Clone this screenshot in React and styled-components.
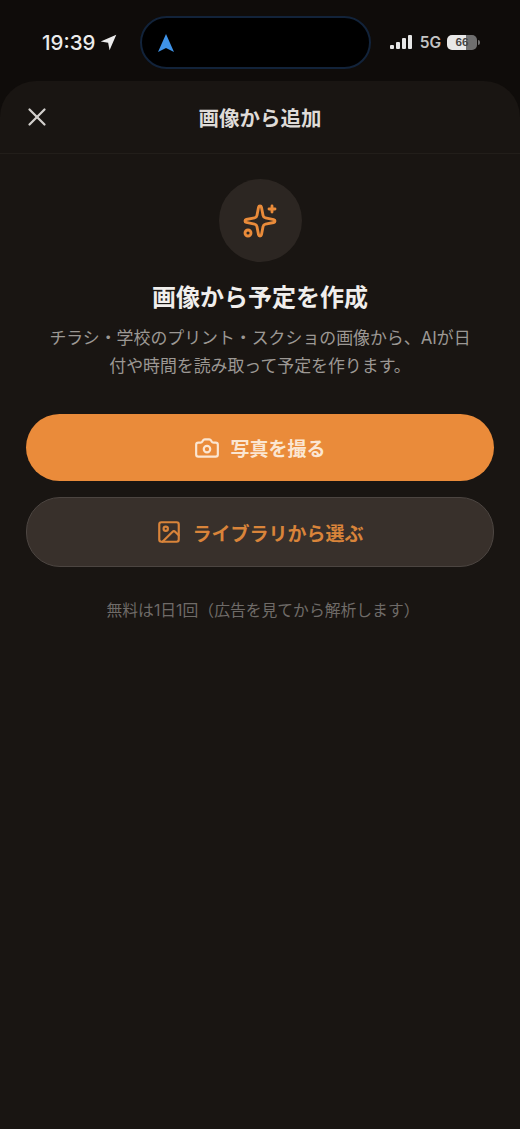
import React from "react";
import styled, { createGlobalStyle } from "styled-components";
import { X, Camera, Image as ImageIcon, Sparkles } from "lucide-react";

const Global = createGlobalStyle`
  html, body { margin: 0; padding: 0; background: #0f0c0a; }
  body { font-family: Inter, "Noto Sans CJK JP", sans-serif; }
`;

const Page = styled.div`
  width: 520px;
  height: 1129px;
  overflow: hidden;
  background: #0f0c0a;
  display: flex;
  flex-direction: column;
`;

const StatusBar = styled.div`
  height: 81px;
  flex-shrink: 0;
  display: flex;
  align-items: flex-start;
  padding: 16px 41px 0 42px;
  box-sizing: border-box;
`;

const Time = styled.div`
  width: 98px;
  height: 52px;
  display: flex;
  align-items: center;
  gap: 5px;
  color: #ececec;
  font-size: 20.5px;
  font-weight: 500;
`;

const Island = styled.div`
  width: 231px;
  height: 53px;
  box-sizing: border-box;
  border-radius: 27px;
  background: #000;
  border: 2px solid #12233a;
  display: flex;
  align-items: center;
  padding-left: 15px;
`;

const StatusRight = styled.div`
  flex: 1;
  height: 52px;
  display: flex;
  align-items: center;
  justify-content: flex-end;
  gap: 6px;
  color: #c4c4c4;
  font-size: 15.5px;
  font-weight: 600;
`;

const Battery = styled.div`
  position: relative;
  width: 30px;
  height: 15px;
  margin-right: 2px;
  border-radius: 5px;
  background: linear-gradient(90deg, #e8e8e8 62%, #6f6f6f 62%);
  color: #444;
  font-size: 10px;
  font-weight: 700;
  line-height: 15px;
  text-align: center;

  &::after {
    content: "";
    position: absolute;
    right: -3px;
    top: 5px;
    width: 2px;
    height: 5px;
    border-radius: 0 2px 2px 0;
    background: #6f6f6f;
  }
`;

const Sheet = styled.div`
  flex: 1;
  background: #191512;
  border-radius: 36px 36px 0 0;
  display: flex;
  flex-direction: column;
`;

const Header = styled.div`
  position: relative;
  height: 72px;
  flex-shrink: 0;
  display: flex;
  align-items: center;
  justify-content: center;
  border-bottom: 1px solid #221e1a;
  color: #dedbd8;
  font-size: 20.5px;
  font-weight: 700;
`;

const Close = styled.div`
  position: absolute;
  left: 22px;
  top: 21px;
  color: #d2cfcc;
  display: flex;
`;

const Body = styled.div`
  padding: 25px 26px 0;
  display: flex;
  flex-direction: column;
  align-items: center;
`;

const Badge = styled.div`
  width: 83px;
  height: 83px;
  border-radius: 50%;
  background: #2c2622;
  color: #ea8b3a;
  display: flex;
  align-items: center;
  justify-content: center;
`;

const Title = styled.h1`
  margin: 20px 0 0;
  color: #f0eeec;
  font-size: 24px;
  line-height: 32px;
  font-weight: 700;
`;

const Desc = styled.p`
  margin: 10px 0 0;
  width: 430px;
  color: #9c9894;
  font-size: 16.9px;
  line-height: 28px;
  text-align: center;
`;

const Button = styled.div`
  width: 468px;
  box-sizing: border-box;
  border-radius: 34px;
  display: flex;
  align-items: center;
  justify-content: center;
  gap: 10px;
  font-size: 19px;
  font-weight: 700;
  height: ${(p) => (p.$primary ? "67px" : "70px")};
  margin-top: ${(p) => (p.$primary ? "34px" : "16px")};
  background: ${(p) => (p.$primary ? "#ea8b3a" : "#38302b")};
  border: ${(p) => (p.$primary ? "none" : "1.5px solid #4c4541")};
  color: ${(p) => (p.$primary ? "#fbe6d2" : "#d9843a")};
`;

const Note = styled.div`
  margin-top: 33px;
  padding-left: 6px;
  color: #6f6b68;
  font-size: 15.8px;
  line-height: 22px;
`;

export default function App() {
  return (
    <Page>
      <Global />
      <StatusBar>
        <Time>
          19:39
          <svg width="17" height="17" viewBox="0 0 24 24" fill="#ececec">
            <path d="M23 1 1 10.5l10.5 2 2 10.5z" />
          </svg>
        </Time>
        <Island>
          <svg width="18" height="20" viewBox="0 0 18 20" fill="#3f93e8">
            <path d="M9 1 17 19 9 15 1 19z" />
          </svg>
        </Island>
        <StatusRight>
          <svg width="24" height="16" viewBox="0 0 24 16" fill="#e6e6e6">
            <rect x="0" y="11" width="4" height="4" rx="1" />
            <rect x="6" y="8" width="4" height="7" rx="1" />
            <rect x="12" y="4" width="4" height="11" rx="1" />
            <rect x="18" y="1" width="4" height="14" rx="1" />
          </svg>
          <span>5G</span>
          <Battery>66</Battery>
        </StatusRight>
      </StatusBar>
      <Sheet>
        <Header>
          <Close>
            <X size={30} strokeWidth={1.8} />
          </Close>
          画像から追加
        </Header>
        <Body>
          <Badge>
            <Sparkles size={36} strokeWidth={1.9} />
          </Badge>
          <Title>画像から予定を作成</Title>
          <Desc>チラシ・学校のプリント・スクショの画像から、AIが日付や時間を読み取って予定を作ります。</Desc>
          <Button $primary>
            <Camera size={26} strokeWidth={2} />
            写真を撮る
          </Button>
          <Button>
            <ImageIcon size={26} strokeWidth={2} />
            ライブラリから選ぶ
          </Button>
          <Note>無料は1日1回（広告を見てから解析します）</Note>
        </Body>
      </Sheet>
    </Page>
  );
}
